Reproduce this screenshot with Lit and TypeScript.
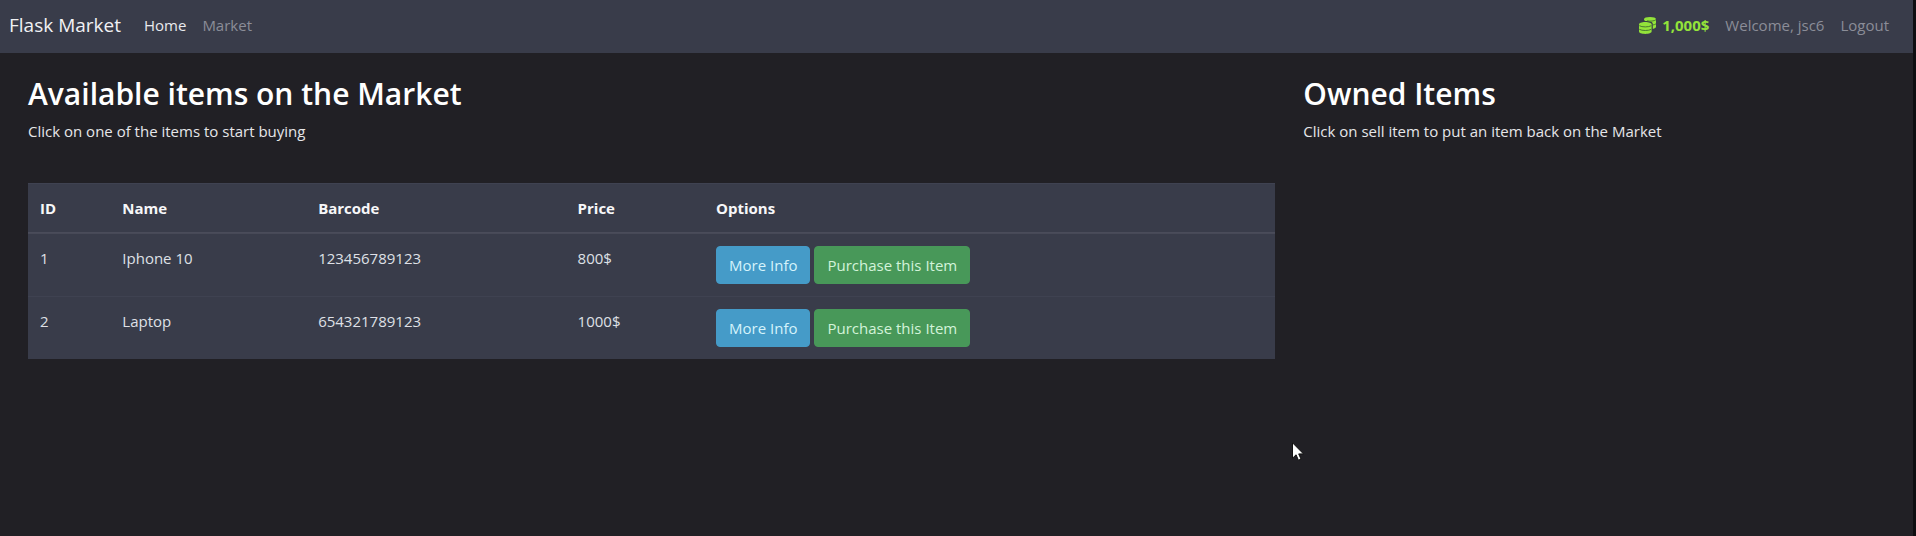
import { LitElement, html, css } from "lit";
import { customElement, property } from "lit/decorators.js";

interface Item {
  id: number;
  name: string;
  barcode: string;
  price: number;
}

@customElement("market-nav")
class MarketNav extends LitElement {
  static styles = css`
    :host {
      display: block;
      background: #393c4a;
    }
    .bar {
      display: flex;
      align-items: center;
      justify-content: space-between;
      padding: 12px 24px 15px 9px;
    }
    .group {
      display: flex;
      align-items: center;
      gap: 16px;
    }
    .link {
      color: #8b8d98;
      text-decoration: none;
    }
    .active {
      color: #e9eaee;
    }
    .brand {
      margin-right: 7px;
      font-size: 19px;
      line-height: 26px;
      color: #f1f1f4;
      text-decoration: none;
    }
    .budget {
      display: flex;
      align-items: center;
      gap: 6px;
      color: #93e33a;
      font-weight: 700;
    }
    .coins {
      display: block;
      width: 17px;
      height: 17px;
    }
  `;

  render() {
    return html`
      <nav class="bar">
        <div class="group">
          <a class="brand" href="#">Flask Market</a>
          <a class="link active" href="#home" aria-current="page">Home</a>
          <a class="link" href="#market">Market</a>
        </div>
        <div class="group">
          <span class="budget">
            <svg class="coins" viewBox="0 0 17 17" aria-hidden="true">
              <path
                d="M5 2.200C5 .9 7.500 0 11 0s6 .9 6 2.200v7.600c0 1-1.300 1.700-3.200 2.100V6.800C13.800 5 10.800 4 7 4 5.800 4 5 3.200 5 2.200z"
                fill="#93e33a"
              />
              <path d="M8 3.900c3.500.5 7 .3 9-1.200M13.800 8c1.300-.2 2.500-.6 3.200-1.200" fill="none" stroke="#3f6d2f" stroke-width=".9" />
              <path
                d="M0 7.300C0 6 2.600 5 6.300 5s6.300 1 6.300 2.300v7.300c0 1.400-2.600 2.400-6.300 2.400S0 16 0 14.600z"
                fill="#93e33a"
              />
              <path
                d="M.3 8.700c2.600 1.600 9.400 1.600 12 0M.3 12.300c2.600 1.600 9.400 1.600 12 0"
                fill="none"
                stroke="#3f6d2f"
                stroke-width=".9"
              />
            </svg>
            1,000$
          </span>
          <span class="link">Welcome, jsc6</span>
          <a class="link" href="#logout">Logout</a>
        </div>
      </nav>
    `;
  }
}

@customElement("item-table")
class ItemTable extends LitElement {
  @property({ attribute: false }) items: Item[] = [];

  static styles = css`
    :host {
      display: block;
    }
    .table {
      width: 100%;
      border-spacing: 0;
      table-layout: fixed;
      background: #393c4a;
      color: #dfe0e6;
    }
    th,
    td {
      box-sizing: border-box;
      padding: 12px;
      border-top: 1px solid #3f4251;
      text-align: left;
      vertical-align: top;
    }
    th {
      border-bottom: 1px solid #4a4c5a;
      color: #f7f7f9;
      font-weight: 700;
    }
    .id {
      width: 6.6%;
    }
    .name {
      width: 15.7%;
    }
    .barcode {
      width: 20.8%;
    }
    .price {
      width: 11.1%;
    }
    .first td {
      border-top-color: #474957;
    }
    .actions {
      display: flex;
      gap: 4px;
    }
    .btn {
      height: 38px;
      padding: 0 12px;
      border: 1px solid transparent;
      border-radius: 4px;
      font: inherit;
      white-space: nowrap;
      cursor: pointer;
    }
    .info {
      background: #459bc8;
      border-color: #459bc8;
      color: #d5f3fb;
    }
    .buy {
      background: #489859;
      border-color: #489859;
      color: #d3f3d9;
    }
  `;

  render() {
    return html`
      <table class="table">
        <thead>
          <tr>
            <th class="id" scope="col">ID</th>
            <th class="name" scope="col">Name</th>
            <th class="barcode" scope="col">Barcode</th>
            <th class="price" scope="col">Price</th>
            <th scope="col">Options</th>
          </tr>
        </thead>
        <tbody>
          ${this.items.map(
            (item, i) => html`
              <tr class=${i === 0 ? "first" : ""}>
                <td>${item.id}</td>
                <td>${item.name}</td>
                <td>${item.barcode}</td>
                <td>${item.price}$</td>
                <td>
                  <div class="actions">
                    <button class="btn info" type="button">More Info</button>
                    <button class="btn buy" type="button">Purchase this Item</button>
                  </div>
                </td>
              </tr>
            `
          )}
        </tbody>
      </table>
    `;
  }
}

@customElement("app-root")
class AppRoot extends LitElement {
  private items: Item[] = [
    { id: 1, name: "Iphone 10", barcode: "123456789123", price: 800 },
    { id: 2, name: "Laptop", barcode: "654321789123", price: 1000 },
  ];

  static styles = css`
    :host {
      display: block;
      position: relative;
      min-height: 100vh;
      box-sizing: border-box;
      border-right: 3px solid #0e0e11;
      background: #212025;
      color: #e6e6e9;
      font: 15px/24px "Open Sans", "Noto Sans", sans-serif;
    }
    .columns {
      display: grid;
      grid-template-columns: 2fr 1fr;
      padding-top: 22px;
    }
    .column {
      padding-left: 28px;
    }
    .title {
      margin: 0 0 7px;
      color: #ffffff;
      font-size: 30px;
      font-weight: 600;
      line-height: 37px;
    }
    .hint {
      margin: 0 0 40px;
    }
    .pointer {
      position: absolute;
      left: 1292px;
      top: 442px;
      width: 12px;
      height: 19px;
    }
  `;

  render() {
    return html`
      <market-nav></market-nav>
      <main class="columns">
        <section class="column">
          <h2 class="title">Available items on the Market</h2>
          <p class="hint">Click on one of the items to start buying</p>
          <item-table .items=${this.items}></item-table>
        </section>
        <section class="column">
          <h2 class="title">Owned Items</h2>
          <p class="hint">Click on sell item to put an item back on the Market</p>
        </section>
      </main>
      <svg class="pointer" viewBox="0 0 12 19" aria-hidden="true">
        <path
          d="M.5 .8v15.400l3.600-3.400 2.300 5.400 2.600-1.100-2.300-5.200h4.800z"
          fill="#fff"
          stroke="#111"
          stroke-width="1"
        />
      </svg>
    `;
  }
}
